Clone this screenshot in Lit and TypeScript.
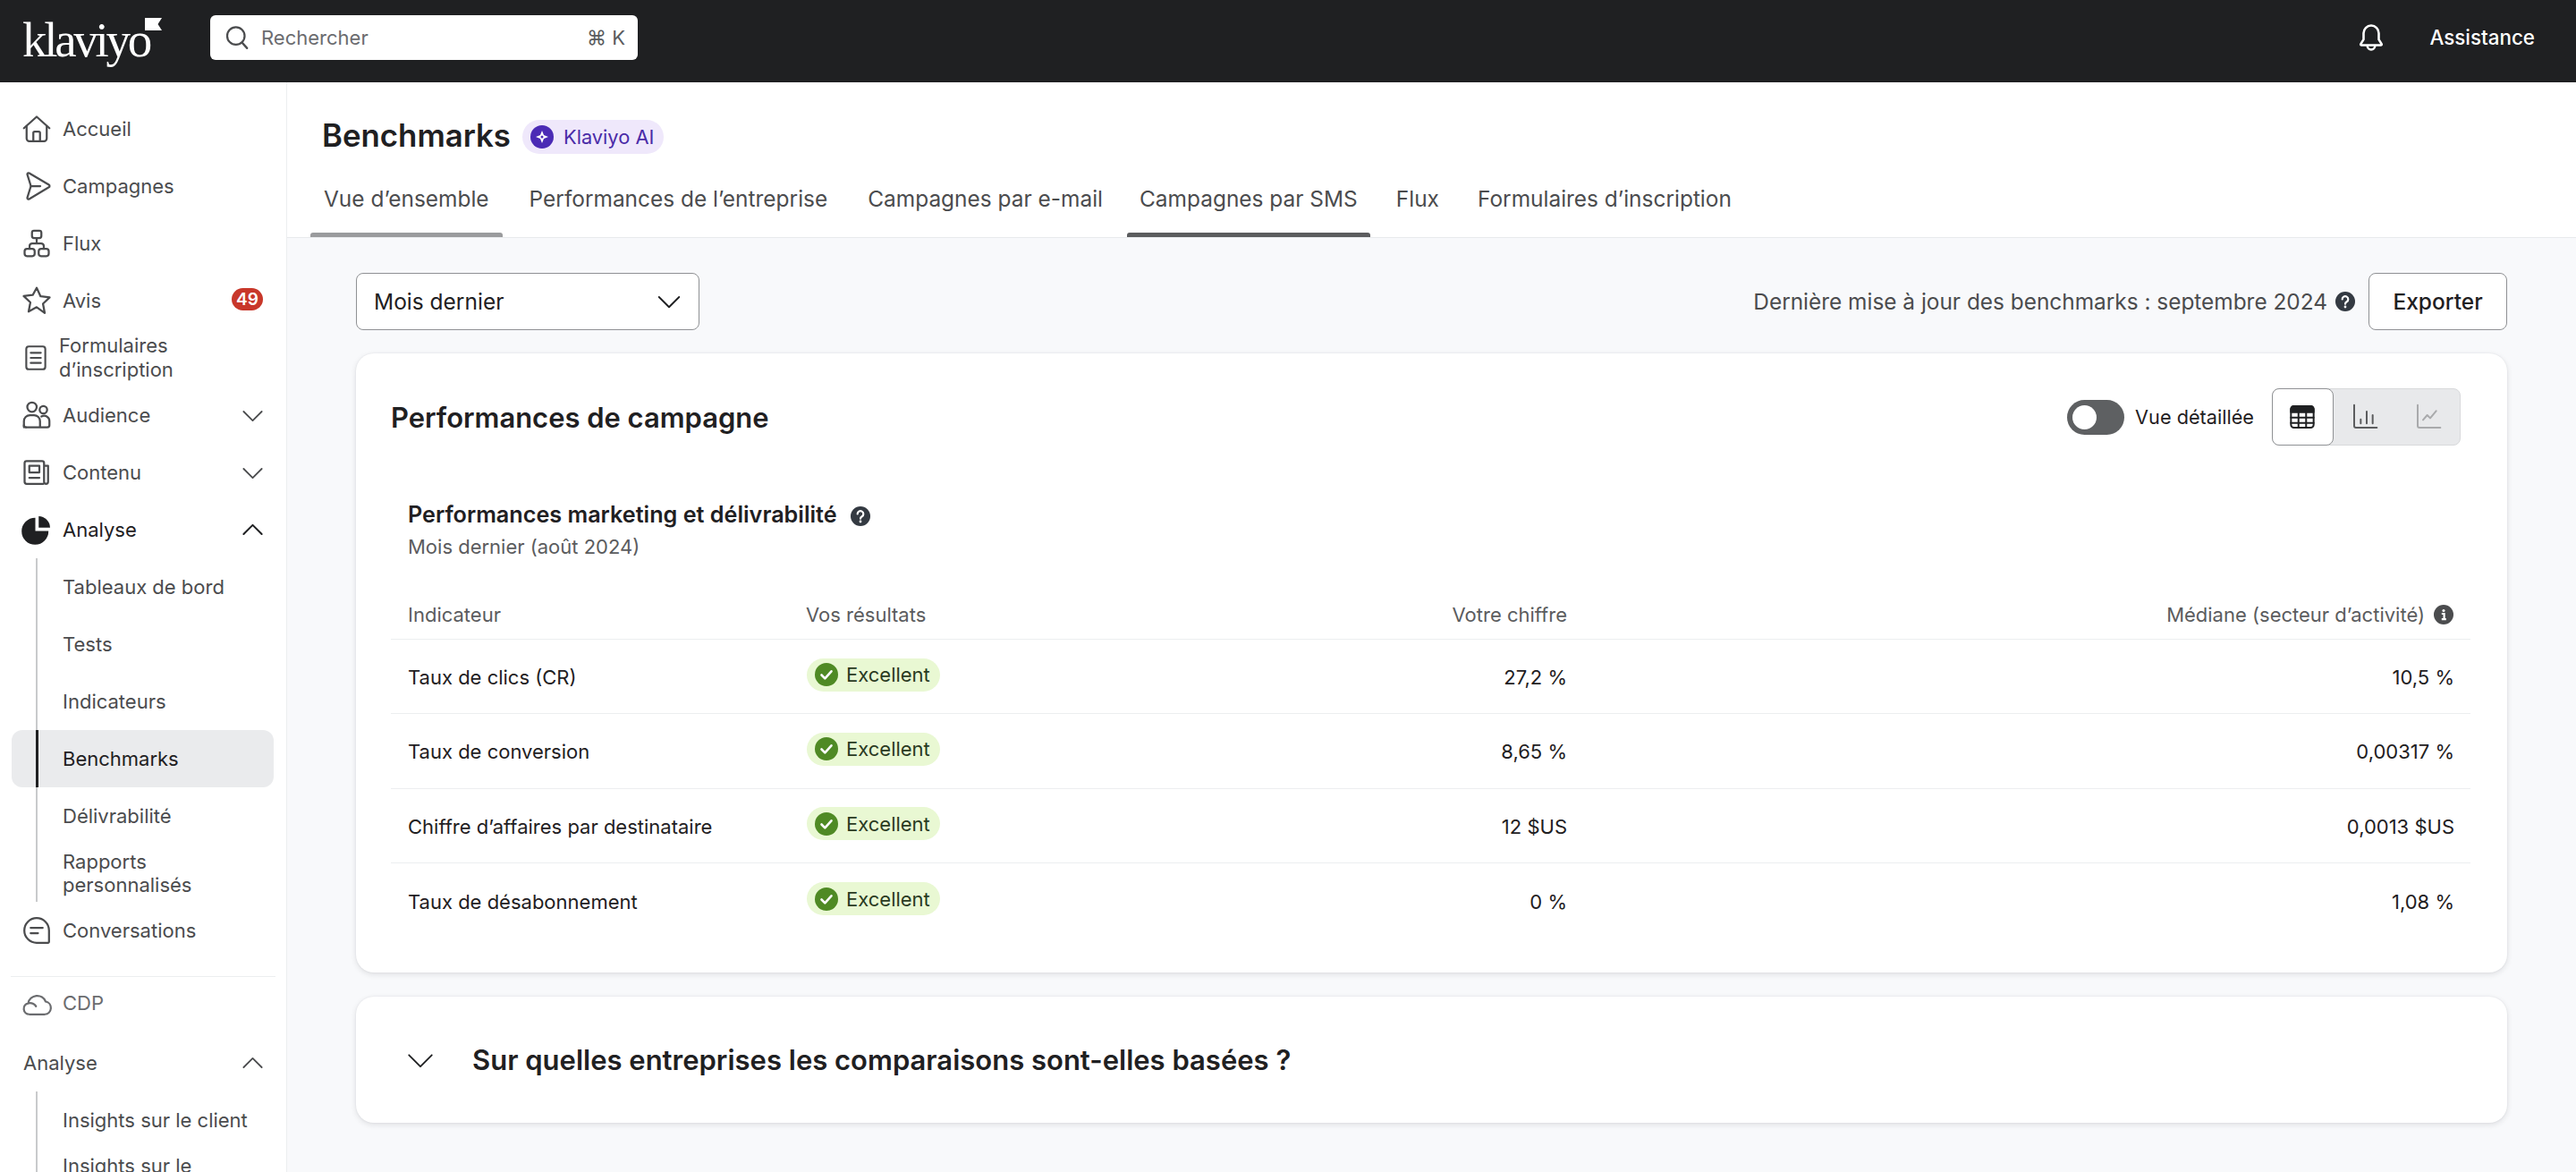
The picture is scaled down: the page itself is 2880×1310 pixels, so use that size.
import { LitElement, html, css, svg } from "lit";
import { customElement } from "lit/decorators.js";

const ic = (body: unknown, size = 36, sw = 1.5) => html`<svg class="ic" width=${size} height=${size} viewBox="0 0 24 24" fill="none" stroke="currentColor" stroke-width=${sw} stroke-linecap="round" stroke-linejoin="round">${body}</svg>`;

const icons = {
  home: svg`<path d="M2.500 11.500 12 3l9.500 8.500"/><path d="M4.500 10v9.200a2 2 0 0 0 2 2h11a2 2 0 0 0 2-2V10"/><path d="M9.500 21v-6a1 1 0 0 1 1-1h3a1 1 0 0 1 1 1v6"/>`,
  send: svg`<path d="M5 3.200c0-.8.800-1.200 1.400-.9l14.700 8.700c.7.4.7 1.500 0 1.900L6.400 21.700c-.6.3-1.400-.1-1.400-.9L7.700 12z"/><path d="M7.700 12h7"/>`,
  flow: svg`<rect x="8.500" y="2.500" width="7" height="5.500" rx="1.500"/><rect x="3" y="16" width="7.500" height="5.500" rx="1.800"/><rect x="13.500" y="16" width="7.500" height="5.500" rx="1.800"/><path d="M12 8v4M6.700 16v-2a2 2 0 0 1 2-2h6.600a2 2 0 0 1 2 2v2"/>`,
  star: svg`<path d="M12 2.500l2.900 6.300 6.800.8-5 4.700 1.300 6.900L12 16.900 6 20.200l1.300-6.900-5-4.700 6.800-.8z"/>`,
  form: svg`<rect x="4.500" y="3" width="15" height="18" rx="2"/><path d="M8 8h8M8 12h8M8 16h8"/>`,
  people: svg`<circle cx="8.500" cy="6" r="3.500"/><circle cx="17" cy="8" r="2.800"/><path d="M2.500 21v-4.500A4.500 4.500 0 0 1 7 12h3a4.500 4.500 0 0 1 4.500 4.500V21M15.500 13a4 4 0 0 1 6 3.500v3a1.500 1.500 0 0 1-1.500 1.500H4"/><path d="M2.500 19.500A1.500 1.500 0 0 0 4 21"/>`,
  news: svg`<path d="M17 20.500H4.500a1.500 1.500 0 0 1-1.500-1.500V5a1.500 1.500 0 0 1 1.500-1.500H16A1.500 1.500 0 0 1 17.500 5v14a1.500 1.500 0 0 0 3 0V7h-3"/><rect x="6.500" y="7" width="7.500" height="5"/><path d="M6.500 16h7.500"/>`,
  pie: svg`<path fill="currentColor" stroke="none" d="M11 3.200v9.800h9.800A10 10 0 1 1 11 3.200z"/><path fill="currentColor" stroke="none" d="M13.500 2a8.800 8.800 0 0 1 8.500 8.500h-8.500z"/>`,
  chat: svg`<path d="M12 2.800a9.200 9.200 0 1 0 0 18.400h8.500a.7.7 0 0 0 .7-.7V12A9.200 9.200 0 0 0 12 2.800z"/><path d="M7.500 10h9M7.500 14h5.500"/>`,
  cloud: svg`<path d="M6.500 20.500a4.200 4.200 0 0 1-.8-8.300 6.800 6.800 0 0 1 13-1.200 4.800 4.800 0 0 1-.6 9.500z"/><path d="M6 12.200c2.500-.3 4.300.6 5.500 2.300"/>`,
  down: svg`<path d="M3 8l9 9 9-9"/>`,
  up: svg`<path d="M3 16l9-9 9 9"/>`,
  search: svg`<circle cx="11" cy="10.500" r="7.800"/><path d="M16.500 16.500 21 21.500"/>`,
  bell: svg`<path d="M12 2.500a6 6 0 0 0-6 6v5l-2.200 3.500c-.3.500 0 1 .6 1h15.200c.6 0 .9-.5.6-1L18 13.500v-5a6 6 0 0 0-6-6z"/><path d="M9 18.500a3 3 0 0 0 6 0"/>`,
  table: svg`<rect x="2.500" y="3" width="19" height="18" rx="2.500"/><path fill="currentColor" d="M2.500 8V5.500A2.500 2.500 0 0 1 5 3h14a2.500 2.500 0 0 1 2.500 2.500V8z"/><path d="M2.500 12.500h19M2.500 17h19M8.800 8v13M15.200 8v13"/>`,
  bars: svg`<path d="M3 2v17.500a1.500 1.500 0 0 0 1.500 1.500H22M8.500 14v3.500M13.500 7.500v10M18.500 10.500v7"/>`,
  line: svg`<path d="M3 2v17.500a1.500 1.500 0 0 0 1.500 1.500H22M7.500 14.500l3.500-4 2.500 2.500 5-6"/>`,
};

const qmark = (size = 22) => html`<svg class="ic" width=${size} height=${size} viewBox="0 0 22 22"><circle cx="11" cy="11" r="11" fill="#343a42"/><path d="M7.700 8.500a3.300 3.300 0 1 1 5 2.800c-1 .6-1.700 1.100-1.700 2.400" fill="none" stroke="#fff" stroke-width="2.200" stroke-linecap="round"/><circle cx="11" cy="17" r="1.400" fill="#fff"/></svg>`;

@customElement("app-root")
export class AppRoot extends LitElement {
  static styles = css`
    :host { display: block; width: 2880px; height: 1310px; overflow: hidden; font-family: Inter, "Noto Sans", sans-serif; color: #1f2022; background: #fff; }
    * { box-sizing: border-box; }
    .ic { display: block; flex: none; }
    .top { height: 92px; background: #1f2022; display: flex; align-items: center; padding: 0 46px 0 25px; color: #fff; }
    .logo { width: 157px; height: 60px; display: flex; align-items: flex-start; margin-top: 0; }
    .logo span { font-family: "Liberation Serif", serif; font-size: 55px; line-height: 60px; letter-spacing: -3.300px; color: #fff; margin-top: -1px; }
    .logo svg { margin: 4px 0 0 -5px; flex: none; }
    .search { margin-left: 53px; width: 478px; height: 50px; margin-top: -9px; border-radius: 6px; background: #fff; display: flex; align-items: center; padding: 0 14px 0 15px; color: #4b4c4e; font-size: 22px; }
    .search .ph { margin-left: 12px; flex: 1; color: #6b6c6f; }
    .search .kbd { color: #5a5b5e; font-family: Inter, "DejaVu Sans", sans-serif; font-size: 22px; }
    .top .sp { flex: 1; }
    .top .help { margin-left: 48px; font-size: 22.400px; font-weight: 500; margin-top: -9px; }
    .top .bell { margin-top: -9px; }
    .body { display: flex; height: 1218px; }
    .side { width: 321px; flex: none; border-right: 1px solid #eceef0; padding-top: 20px; overflow: hidden; font-size: 22px; color: #4b4c4e; }
    .row { height: 64px; display: flex; align-items: center; padding: 0 28px 0 26px; }
    .row > svg:first-child { margin: 0 -3px; }
    .row > svg:last-child:not(:first-child) { margin: 0 -4px 0 0; }
    .row .lbl { margin-left: 14px; flex: 1; line-height: 27px; }
    .row.cur { color: #1f2022; }
    .row.form .lbl { margin-left: 12px; }
    .badge { width: 35px; height: 25px; border-radius: 13px; background: #c8372a; color: #fff; font-size: 19px; font-weight: 600; display: flex; align-items: center; justify-content: center; margin: -4px -2px 0 0; }
    .sub { margin-left: 40px; border-left: 2px solid #c9cacc; }
    .sub .item { height: 64px; display: flex; align-items: center; padding-left: 28px; line-height: 26px; }
    .sub .item.active { margin-left: -29px; width: 293px; padding-left: 57px; border-radius: 12px; color: #1f2022; background: linear-gradient(#1f2022, #1f2022) 27px 0 / 3px 100% no-repeat, #eaebed; }
    .sub.clip { height: 200px; }
    .div { height: 1px; background: #eceef0; margin: 19px 12px 0; }
    .row.cdp { height: 58px; color: #6b6c6f; }
    .row.sec { margin-top: 6px; }
    .row.sec .lbl { margin-left: 0; }
    .main { flex: 1; min-width: 0; background: #f8f9fb; }
    .hdr { height: 174px; background: #fff; border-bottom: 1px solid #e8eaec; padding: 0 0 0 40px; display: flex; flex-direction: column; }
    .ttl { display: flex; align-items: center; height: 38px; margin-top: 40px; }
    .ttl h1 { margin: 0 0 0 -1px; font-size: 34.800px; font-weight: 600; line-height: 38px; }
    .ai { margin-left: 13px; height: 38px; width: 158px; border-radius: 19px; background: #efe8fb; display: flex; align-items: center; padding-left: 9px; font-size: 21.800px; color: #4a2ba8; margin-top: 4px; }
    .ai span { margin-left: 11px; }
    .tabs { display: flex; margin-top: 37px; margin-left: -14px; font-size: 24.450px; color: #4b4c4e; flex: 1; }
    .tab { padding: 0 15px; display: flex; flex-direction: column; justify-content: space-between; line-height: 30px; white-space: nowrap; margin-right: 15px; }
    .tab::after { content: ""; height: 5px; border-radius: 3px 3px 0 0; margin: 0 -15px; }
    .tab.hover::after { background: #9a9b9d; }
    .tab.mail { margin-right: 12px; }
    .tab.on { padding: 0 14px; margin-right: 0; }
    .tab.on::after { background: #5b5c5e; margin: 0 -14px; }
    .tab.flux { margin: 0 13px 0 14px; }
    .cont { padding: 39px 77px 0; display: flex; flex-direction: column; }
    .bar { display: flex; align-items: center; height: 64px; }
    .sel { width: 384px; height: 64px; background: #fff; border: 1px solid #8f9194; border-radius: 8px; display: flex; align-items: center; justify-content: space-between; padding: 0 18px 0 19px; font-size: 24.500px; }
    .bar .sp { flex: 1; }
    .upd { font-size: 24.400px; color: #4b4c4e; margin-right: 9px; }
    .btn { width: 155px; height: 64px; margin-left: 15px; background: #fff; border: 1px solid #8f9194; border-radius: 8px; display: flex; align-items: center; justify-content: center; font-size: 24.500px; font-weight: 500; }
    .card { background: #fff; border-radius: 20px; box-shadow: 0 2px 6px rgba(30, 35, 45, .12), 0 0 2px rgba(30, 35, 45, .08); }
    .perf { margin-top: 26px; padding: 39px 41px 39px 39px; }
    .phead { display: flex; align-items: center; height: 64px; padding-right: 11px; }
    .phead h2 { margin: 0; font-size: 30.950px; font-weight: 600; flex: 1; }
    .tog { width: 64px; height: 39px; border-radius: 20px; background: #5e6062; padding: 6px 0 0 6px; }
    .tog i { display: block; width: 27px; height: 27px; border-radius: 50%; background: #fff; }
    .tlbl { margin: 0 20px 0 12px; font-size: 21.700px; color: #1f2022; }
    .seg { width: 211px; height: 64px; background: #e8e9eb; border: 1px solid #d8d9db; border-radius: 8px; display: flex; align-items: center; color: #5b5c5e; }
    .seg .s { height: 64px; width: 69px; margin: -1px 0 0 -1px; border: 1px solid #8f9194; border-radius: 8px; background: #fff; color: #1f2022; display: flex; align-items: center; justify-content: center; }
    .seg .o { width: 71px; display: flex; justify-content: center; }
    .seg .o.dim { color: #a9aaac; }
    .sec-h { padding: 59px 0 0 19px; }
    .sec-h .t { display: flex; align-items: center; font-size: 25.200px; font-weight: 600; line-height: 36px; }
    .sec-h .t svg { margin: 3px 0 0 15px; }
    .sec-h .m { font-size: 22px; line-height: 36px; color: #5b5c5e; }
    .tbl { margin-top: 31px; font-size: 22px; }
    .tr { display: grid; grid-template-columns: 444px 300px 591px 1fr; align-items: center; height: 83.330px; border-bottom: 1px solid #eceef0; padding: 0; }
    .tr > div { padding: 2px 20px 0; display: flex; align-items: center; }
    .tr > div:first-child { padding-left: 19px; }
    .tr > div:last-child { padding-right: 18px; }
    .tr .r { justify-content: flex-end; text-align: right; }
    .tr.h { height: 55px; color: #5b5c5e; padding-bottom: 3px; }
    .tr.h > div:last-child { padding-right: 19px; }
    .tr.l { border-bottom: 0; }
    .tr.h svg { margin-left: 10px; }
    .pill { width: 149px; height: 37px; border-radius: 19px; background: #e9f8d3; display: flex; align-items: center; padding-left: 9px; font-size: 22px; color: #2a3a1f; margin: -6px 0 0 1px; }
    .pill span { margin-left: 9px; }
    .faq { margin-top: 27px; height: 141px; display: flex; align-items: center; padding-left: 55px; }
    .faq span { margin-left: 41px; font-size: 31px; font-weight: 600; }
  `;

  private side() {
    return html`<nav class="side">
      <div class="row">${ic(icons.home)}<div class="lbl">Accueil</div></div>
      <div class="row">${ic(icons.send)}<div class="lbl">Campagnes</div></div>
      <div class="row">${ic(icons.flow)}<div class="lbl">Flux</div></div>
      <div class="row">${ic(icons.star)}<div class="lbl">Avis</div><div class="badge">49</div></div>
      <div class="row form">${ic(icons.form, 34)}<div class="lbl">Formulaires<br />d’inscription</div></div>
      <div class="row">${ic(icons.people)}<div class="lbl">Audience</div>${ic(icons.down, 27, 1.6)}</div>
      <div class="row">${ic(icons.news)}<div class="lbl">Contenu</div>${ic(icons.down, 27, 1.6)}</div>
      <div class="row cur">${ic(icons.pie)}<div class="lbl">Analyse</div>${ic(icons.up, 27, 1.8)}</div>
      <div class="sub">
        <div class="item">Tableaux de bord</div>
        <div class="item">Tests</div>
        <div class="item">Indicateurs</div>
        <div class="item active">Benchmarks</div>
        <div class="item">Délivrabilité</div>
        <div class="item">Rapports<br />personnalisés</div>
      </div>
      <div class="row">${ic(icons.chat)}<div class="lbl">Conversations</div></div>
      <div class="div"></div>
      <div class="row cdp">${ic(icons.cloud)}<div class="lbl">CDP</div></div>
      <div class="row sec"><div class="lbl">Analyse</div>${ic(icons.up, 27, 1.6)}</div>
      <div class="sub clip">
        <div class="item">Insights sur le client</div>
        <div class="item">Insights sur le<br />marketing</div>
      </div>
    </nav>`;
  }

  private pill() {
    return html`<div class="pill"><svg class="ic" width="26" height="26" viewBox="0 0 26 26"><circle cx="13" cy="13" r="13" fill="#4f8a24"/><path d="M7.500 13.500l3.800 3.800 7.200-8" fill="none" stroke="#fff" stroke-width="2.600" stroke-linecap="round" stroke-linejoin="round"/></svg><span>Excellent</span></div>`;
  }

  render() {
    const rows = [
      ["Taux de clics (CR)", "27,2 %", "10,5 %"],
      ["Taux de conversion", "8,65 %", "0,00317 %"],
      ["Chiffre d’affaires par destinataire", "12 $US", "0,0013 $US"],
      ["Taux de désabonnement", "0 %", "1,08 %"],
    ];
    return html`
      <header class="top">
        <div class="logo"><span>klaviyo</span><svg width="19" height="15" viewBox="0 0 19 15"><path d="M0 0h19l-4.500 7 4.500 7H0z" fill="#fff"/></svg></div>
        <div class="search">${ic(icons.search, 30, 1.8)}<div class="ph">Rechercher</div><div class="kbd">⌘ K</div></div>
        <div class="sp"></div>
        <div class="bell">${ic(icons.bell, 34, 1.8)}</div>
        <div class="help">Assistance</div>
      </header>
      <div class="body">
        ${this.side()}
        <main class="main">
          <div class="hdr">
            <div class="ttl"><h1>Benchmarks</h1>
              <div class="ai"><svg class="ic" width="26" height="26" viewBox="0 0 26 26"><circle cx="13" cy="13" r="13" fill="#4b2bb5"/><path d="M13 6l2 5 5 2-5 2-2 5-2-5-5-2 5-2z" fill="#fff"/><circle cx="13" cy="13" r="1.500" fill="#4b2bb5"/></svg><span>Klaviyo AI</span></div>
            </div>
            <div class="tabs">
              <div class="tab hover">Vue d’ensemble</div>
              <div class="tab">Performances de l’entreprise</div>
              <div class="tab mail">Campagnes par e-mail</div>
              <div class="tab on">Campagnes par SMS</div>
              <div class="tab flux">Flux</div>
              <div class="tab">Formulaires d’inscription</div>
            </div>
          </div>
          <div class="cont">
            <div class="bar">
              <div class="sel"><span>Mois dernier</span>${ic(icons.down, 30, 1.5)}</div>
              <div class="sp"></div>
              <div class="upd">Dernière mise à jour des benchmarks : septembre 2024</div>
              ${qmark(22)}
              <div class="btn">Exporter</div>
            </div>
            <section class="card perf">
              <div class="phead">
                <h2>Performances de campagne</h2>
                <div class="tog"><i></i></div>
                <div class="tlbl">Vue détaillée</div>
                <div class="seg">
                  <div class="s">${ic(icons.table, 32, 1.5)}</div>
                  <div class="o">${ic(icons.bars, 32, 1.5)}</div>
                  <div class="o dim">${ic(icons.line, 32, 1.5)}</div>
                </div>
              </div>
              <div class="sec-h">
                <div class="t">Performances marketing et délivrabilité ${qmark(22)}</div>
                <div class="m">Mois dernier (août 2024)</div>
              </div>
              <div class="tbl">
                <div class="tr h">
                  <div>Indicateur</div><div>Vos résultats</div><div class="r">Votre chiffre</div>
                  <div class="r">Médiane (secteur d’activité)
                    <svg class="ic" width="22" height="22" viewBox="0 0 22 22"><circle cx="11" cy="11" r="11" fill="#4b4c4e"/><circle cx="11" cy="6.500" r="1.600" fill="#fff"/><path d="M8.800 10h2.800v6M8.800 16.200h5" fill="none" stroke="#fff" stroke-width="2.200"/></svg>
                  </div>
                </div>
                ${rows.map((r, i) => html`<div class="tr ${i === 3 ? "l" : ""}"><div>${r[0]}</div><div>${this.pill()}</div><div class="r">${r[1]}</div><div class="r">${r[2]}</div></div>`)}
              </div>
            </section>
            <section class="card faq">${ic(icons.down, 34, 1.3)}<span>Sur quelles entreprises les comparaisons sont-elles basées ?</span></section>
          </div>
        </main>
      </div>
    `;
  }
}
